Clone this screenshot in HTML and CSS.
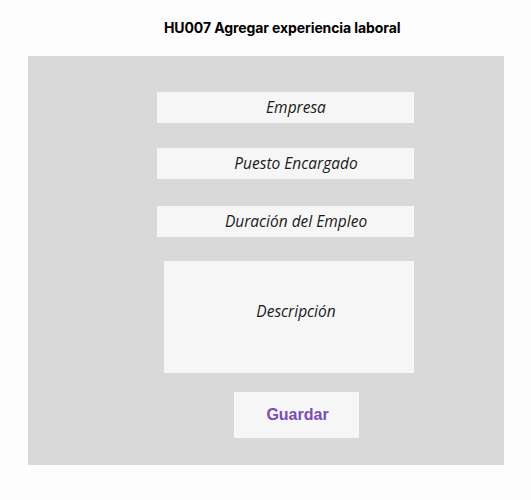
FILE: index.html
```html
<!DOCTYPE html>
<html lang="es">
<head>
<meta charset="utf-8">
<title>HU007 Agregar experiencia laboral</title>
<link rel="stylesheet" href="styles.css">
</head>
<body>
  <h1 class="title">HU007 Agregar experiencia laboral</h1>
  <div class="panel">
    <div class="field field-empresa">Empresa</div>
    <div class="field field-puesto">Puesto Encargado</div>
    <div class="field field-duracion">Duración del Empleo</div>
    <div class="field field-desc">Descripción</div>
    <div class="save">Guardar</div>
  </div>
</body>
</html>
```
FILE: styles.css
```css
html, body {
  margin: 0;
  padding: 0;
  background: #fdfdfd;
}
body {
  width: 531px;
  height: 500px;
}
.title {
  margin: 0;
  padding: 19px 0 0 164px;
  height: 37px;
  font-family: Inter, "Liberation Sans", sans-serif;
  font-weight: 700;
  font-size: 14px;
  letter-spacing: -0.1px;
  line-height: 17px;
  color: #000;
}
.panel {
  margin-left: 28px;
  width: 476px;
  height: 409px;
  background: #d9d9d9;
  display: flex;
  flex-direction: column;
  padding-top: 36px;
  box-sizing: border-box;
}
.field {
  background: #f6f6f6;
  margin-left: 129px;
  width: 257px;
  height: 31px;
  font-family: "Open Sans", sans-serif;
  font-style: italic;
  font-size: 15.5px;
  color: #1a1a1a;
  display: flex;
  align-items: center;
  justify-content: center;
  box-sizing: border-box;
  padding-left: 21px;
  padding-bottom: 1px;
}
.field-puesto { margin-top: 25px; }
.field-duracion { margin-top: 27px; }
.field-desc {
  margin-top: 24px;
  margin-left: 136px;
  width: 250px;
  height: 112px;
  padding-left: 14px;
  padding-bottom: 12px;
}
.save {
  margin-top: 19px;
  margin-left: 206px;
  width: 125px;
  height: 46px;
  background: #f6f6f6;
  font-family: "Liberation Sans", Arial, sans-serif;
  font-weight: 700;
  font-size: 16px;
  color: #7c4bb8;
  display: flex;
  align-items: center;
  justify-content: center;
  padding-left: 2px;
  box-sizing: border-box;
}
```
